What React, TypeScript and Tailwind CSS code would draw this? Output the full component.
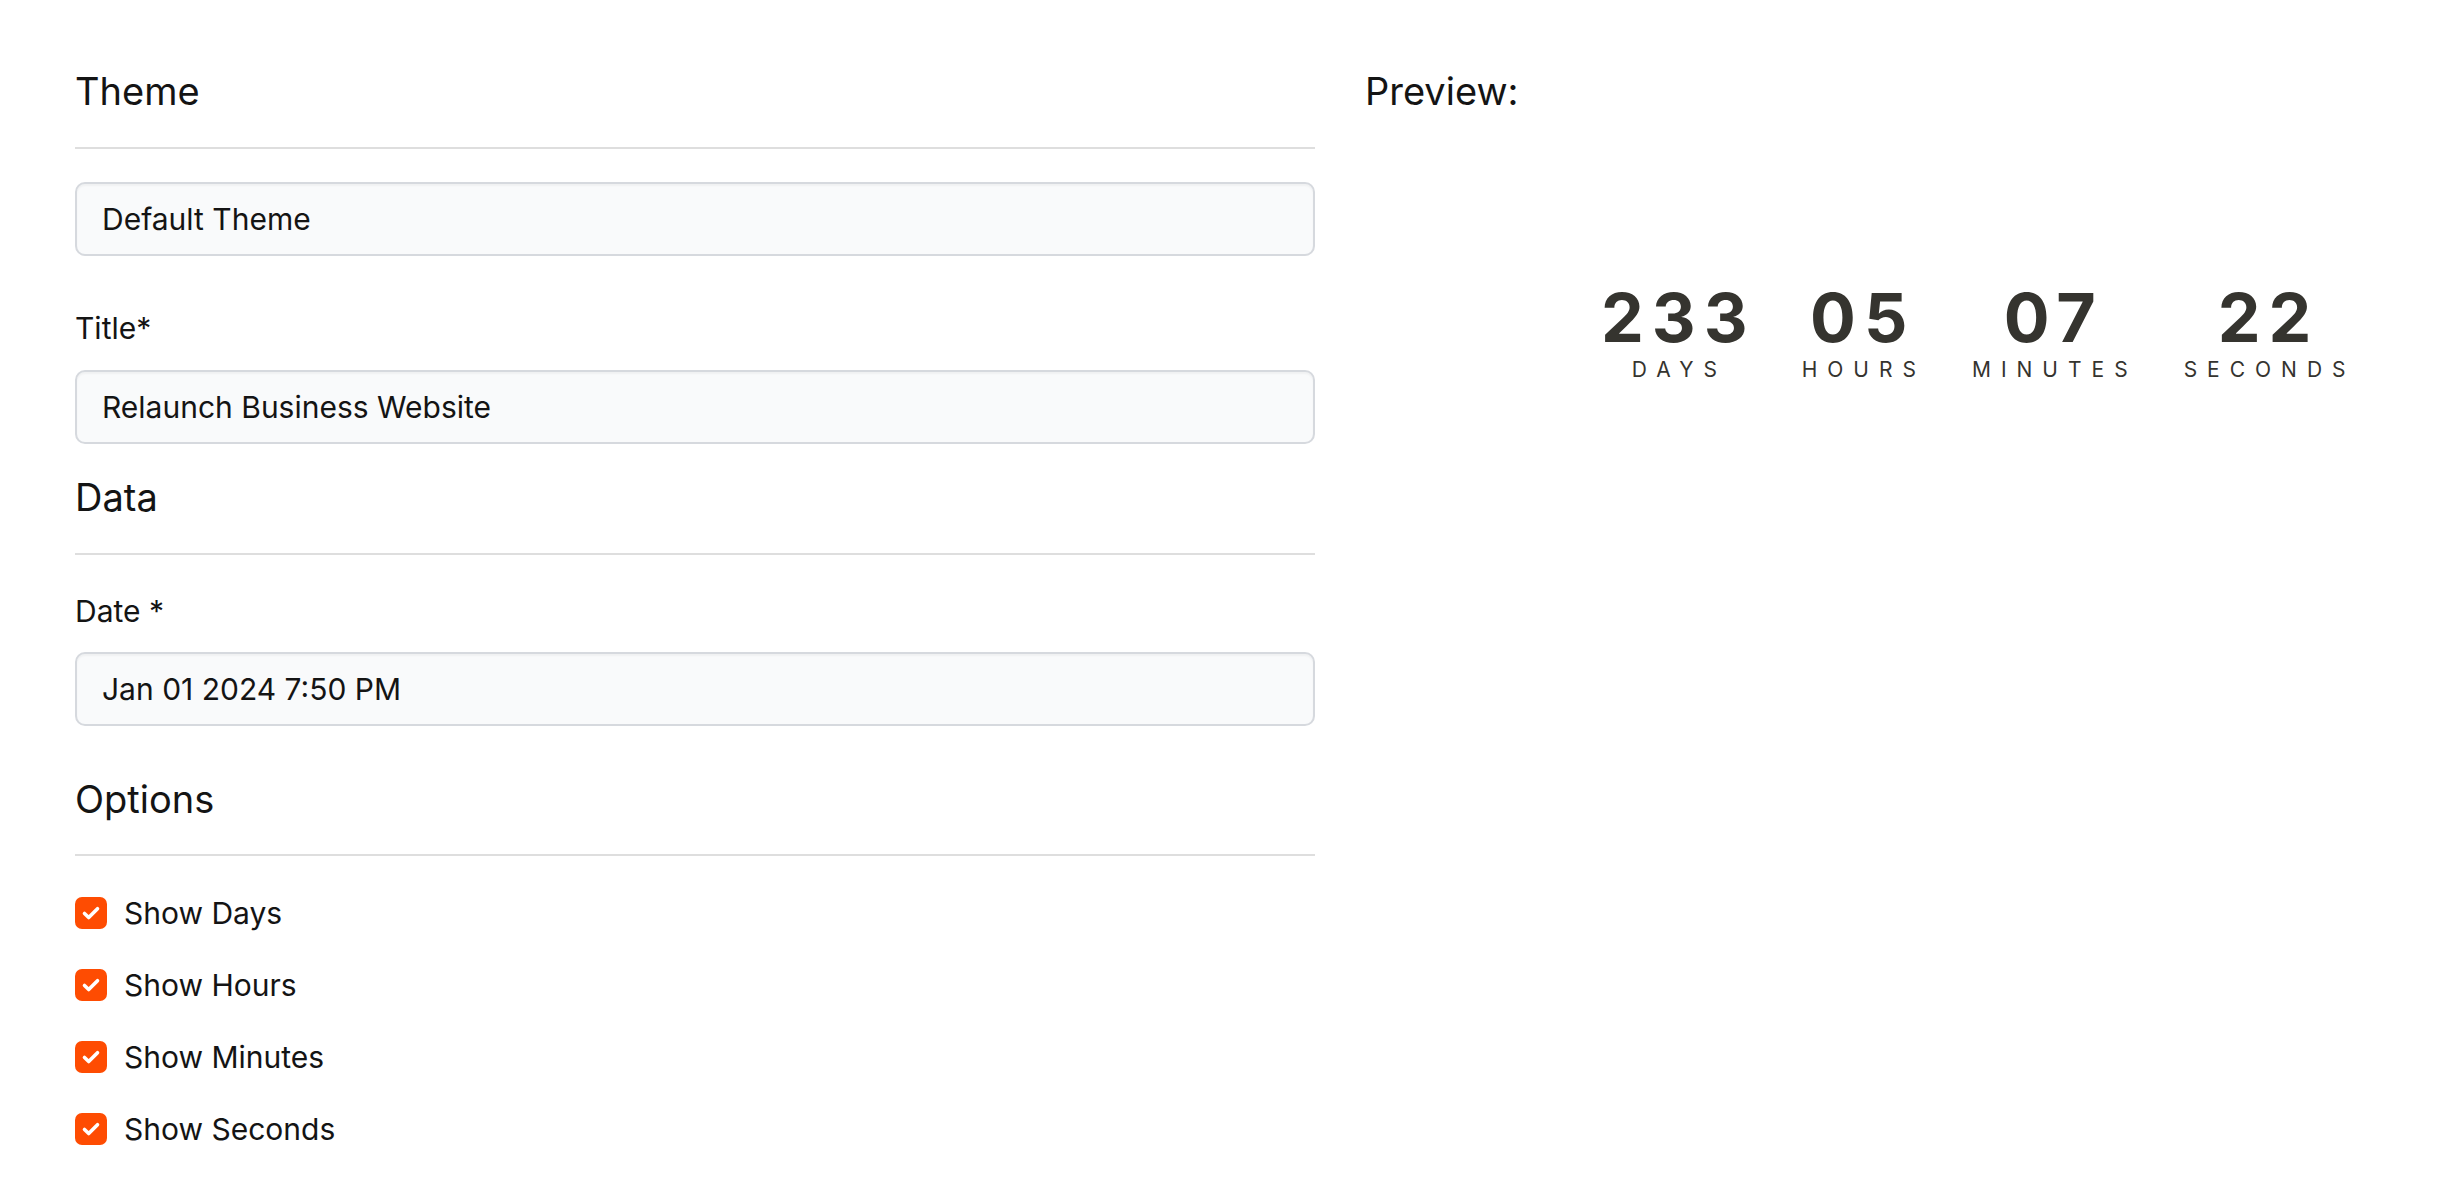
import React from "react"

function SectionHeading({ children }: { children: React.ReactNode }) {
  return <h2 className="text-[38px] leading-[46px] font-normal text-[#141414]">{children}</h2>
}

function Divider({ className = "" }: { className?: string }) {
  return <div className={`h-[2px] bg-[#dedede] ${className}`} />
}

function Field({ value, className = "" }: { value: string; className?: string }) {
  return (
    <input
      readOnly
      value={value}
      className={`block w-full h-[74px] rounded-[10px] border-2 border-[#d6d9de] bg-[#f9fafb] px-[25px] text-[30px] text-[#141414] outline-none shadow-[inset_0_2px_2px_rgba(0,0,0,0.04)] ${className}`}
    />
  )
}

function Check({ label }: { label: string }) {
  return (
    <label className="flex items-center gap-[17px] h-[32px]">
      <span className="w-[32px] h-[32px] rounded-[7px] bg-[#fe4c02] flex items-center justify-center">
        <svg width="32" height="32" viewBox="0 0 32 32" fill="none">
          <path d="M9.5 16.5l4.2 4 8.8-8.8" stroke="white" strokeWidth="3.6" strokeLinecap="round" strokeLinejoin="round" />
        </svg>
      </span>
      <span className="text-[30px] leading-[36px] text-[#141414]">{label}</span>
    </label>
  )
}

const units = [
  { value: "233", label: "DAYS" },
  { value: "05", label: "HOURS" },
  { value: "07", label: "MINUTES" },
  { value: "22", label: "SECONDS" },
]

export default function App() {
  return (
    <div className="min-h-screen bg-white flex px-[75px] pt-[68px] font-['Inter',sans-serif]">
      {/* Settings form */}
      <div className="w-[1240px] shrink-0">
        <SectionHeading>Theme</SectionHeading>
        <Divider className="mt-[33px]" />
        <Field value="Default Theme" className="mt-[33px]" />

        <p className="mt-[54px] text-[30px] leading-[36px] text-[#141414]">Title*</p>
        <Field value="Relaunch Business Website" className="mt-[24px]" />

        <div className="mt-[30px]">
          <SectionHeading>Data</SectionHeading>
        </div>
        <Divider className="mt-[33px]" />
        <p className="mt-[38px] text-[30px] leading-[36px] text-[#141414]">Date *</p>
        <Field value="Jan 01 2024 7:50 PM" className="mt-[23px]" />

        <div className="mt-[50px]">
          <SectionHeading>Options</SectionHeading>
        </div>
        <Divider className="mt-[32px]" />
        <div className="mt-[41px] flex flex-col gap-[40px]">
          <Check label="Show Days" />
          <Check label="Show Hours" />
          <Check label="Show Minutes" />
          <Check label="Show Seconds" />
        </div>
      </div>

      {/* Preview */}
      <div className="ml-[50px] flex-1">
        <SectionHeading>Preview:</SectionHeading>
        <div className="mt-[169px] ml-[228px] flex gap-[36px] text-[#35342f]">
          {units.map((u) => (
            <div key={u.label} className="flex flex-col items-center">
              <span className="text-[68px] leading-[68px] font-bold tracking-[8px] pl-[8px]">{u.value}</span>
              <span className="mt-[8px] text-[21px] leading-[21px] tracking-[10px] pl-[10px]">{u.label}</span>
            </div>
          ))}
        </div>
      </div>
    </div>
  )
}
